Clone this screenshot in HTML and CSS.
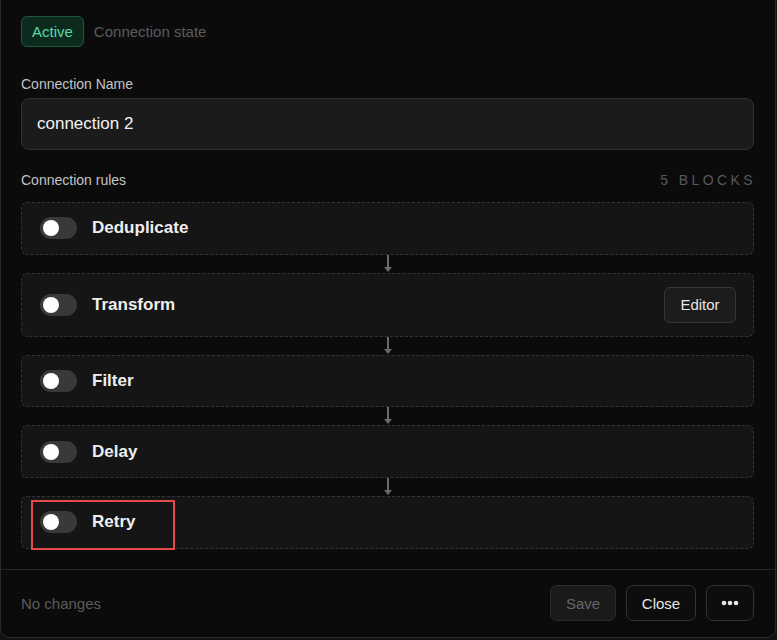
FILE: index.html
```html
<html>
    <head>
        <title>Connection</title>
        <meta name="viewport" content="width=device-width, initial-scale=1.0">
        <link rel="stylesheet" href="styles.css">
    </head>
    <body>
        <section id="dialog">
            <div id="content">
                <div class="stateRow">
                    <span class="badge">Active</span>
                    <span class="muted">Connection state</span>
                </div>

                <label class="fieldLabel" for="connName">Connection Name</label>
                <div class="nameInput" id="connName">connection 2</div>

                <div class="rulesHeader">
                    <span>Connection rules</span>
                    <span class="count">5 BLOCKS</span>
                </div>

                <div class="rules">
                    <div class="block">
                        <span class="toggle"><span class="knob"></span></span>
                        <span class="blockName">Deduplicate</span>
                    </div>
                    <div class="arrow"><span class="stem"></span><span class="head"></span></div>
                    <div class="block">
                        <span class="toggle"><span class="knob"></span></span>
                        <span class="blockName">Transform</span>
                        <button class="editorButton">Editor</button>
                    </div>
                    <div class="arrow"><span class="stem"></span><span class="head"></span></div>
                    <div class="block">
                        <span class="toggle"><span class="knob"></span></span>
                        <span class="blockName">Filter</span>
                    </div>
                    <div class="arrow"><span class="stem"></span><span class="head"></span></div>
                    <div class="block">
                        <span class="toggle"><span class="knob"></span></span>
                        <span class="blockName">Delay</span>
                    </div>
                    <div class="arrow"><span class="stem"></span><span class="head"></span></div>
                    <div class="block">
                        <span class="toggle"><span class="knob"></span></span>
                        <span class="blockName">Retry</span>
                        <span class="highlight"></span>
                    </div>
                </div>
            </div>

            <div id="footer">
                <span class="muted">No changes</span>
                <div class="actions">
                    <button class="saveButton" disabled>Save</button>
                    <button class="closeButton">Close</button>
                    <button class="moreButton">
                        <svg width="18" height="6" viewBox="0 0 18 6">
                            <circle cx="3" cy="3" r="2.3" fill="#e6e6e6"/>
                            <circle cx="9" cy="3" r="2.3" fill="#e6e6e6"/>
                            <circle cx="15" cy="3" r="2.3" fill="#e6e6e6"/>
                        </svg>
                    </button>
                </div>
            </div>
        </section>
    </body>
</html>
```

FILE: styles.css
```css
body {
    margin: 0;
    background-color: #121212;
    font-family: "Liberation Sans", Arial, sans-serif;
    color: #e8e8e8;
}

#dialog {
    width: 776px;
    height: 638px;
    box-sizing: border-box;
    background-color: #0b0b0b;
    border: 1px solid #2a2a2a;
    border-top: none;
    border-radius: 0 0 9px 9px;
    display: flex;
    flex-direction: column;
}

#content {
    padding: 16px 21px 20px 20px;
    display: flex;
    flex-direction: column;
}

.stateRow {
    display: flex;
    align-items: center;
    gap: 10px;
}

.badge {
    height: 31px;
    box-sizing: border-box;
    padding: 0 10px;
    display: flex;
    align-items: center;
    font-size: 15px;
    color: #55dca0;
    background-color: #0d2a1e;
    border: 1px solid #1c5a3e;
    border-radius: 6px;
}

.muted {
    font-size: 15px;
    color: #5c5c5c;
}

.fieldLabel {
    margin-top: 29px;
    font-size: 14px;
    line-height: 17px;
    color: #c4c4c4;
}

.nameInput {
    margin-top: 5px;
    height: 52px;
    box-sizing: border-box;
    padding: 0 15px;
    display: flex;
    align-items: center;
    font-size: 17px;
    color: #f2f2f2;
    background-color: #1b1b1b;
    border: 1px solid #323232;
    border-radius: 8px;
}

.rulesHeader {
    margin-top: 22px;
    display: flex;
    justify-content: space-between;
    align-items: center;
    font-size: 14px;
    line-height: 17px;
    color: #c4c4c4;
}

.count {
    letter-spacing: 3.4px;
    margin-right: -2px;
    color: #585858;
}

.rules {
    margin-top: 13px;
    display: flex;
    flex-direction: column;
}

.block {
    position: relative;
    min-height: 52.67px;
    box-sizing: border-box;
    padding: 13px 17px 13px 18px;
    display: flex;
    align-items: center;
    gap: 15px;
    background-color: #151515;
    border: 1px dashed #333333;
    border-radius: 6px;
}

.toggle {
    width: 37px;
    height: 22px;
    box-sizing: border-box;
    padding: 3px;
    border-radius: 11px;
    background-color: #393937;
    display: flex;
    align-items: center;
}

.knob {
    width: 16px;
    height: 16px;
    border-radius: 50%;
    background-color: #ffffff;
}

.blockName {
    font-size: 17px;
    font-weight: bold;
    color: #eeeeee;
    flex: 1;
}

.editorButton {
    width: 72px;
    height: 36px;
    font-family: inherit;
    font-size: 15px;
    color: #e6e6e6;
    background-color: #1c1c1c;
    border: 1px solid #363636;
    border-radius: 6px;
}

.highlight {
    position: absolute;
    left: 9px;
    top: 3px;
    width: 144px;
    height: 50px;
    box-sizing: border-box;
    border: 2px solid #e5484d;
}

.arrow {
    height: 18px;
    display: flex;
    flex-direction: column;
    align-items: center;
}

.stem {
    width: 2px;
    height: 12px;
    background-color: #6a6a6a;
}

.head {
    width: 0;
    height: 0;
    border-left: 4px solid transparent;
    border-right: 4px solid transparent;
    border-top: 5px solid #6a6a6a;
}

#footer {
    flex: 1;
    padding: 0 21px 0 20px;
    border-top: 1px solid #262626;
    display: flex;
    justify-content: space-between;
    align-items: center;
}

.actions {
    display: flex;
    gap: 10px;
}

.actions > button {
    height: 36px;
    font-family: inherit;
    font-size: 15px;
    border-radius: 7px;
    display: flex;
    align-items: center;
    justify-content: center;
}

.saveButton {
    width: 66px;
    color: #666666;
    background-color: #1a1a1a;
    border: 1px solid #2c2c2c;
}

.closeButton {
    width: 70px;
    color: #e6e6e6;
    background-color: #0d0d0d;
    border: 1px solid #333333;
}

.moreButton {
    width: 48px;
    background-color: #0d0d0d;
    border: 1px solid #333333;
}
```
